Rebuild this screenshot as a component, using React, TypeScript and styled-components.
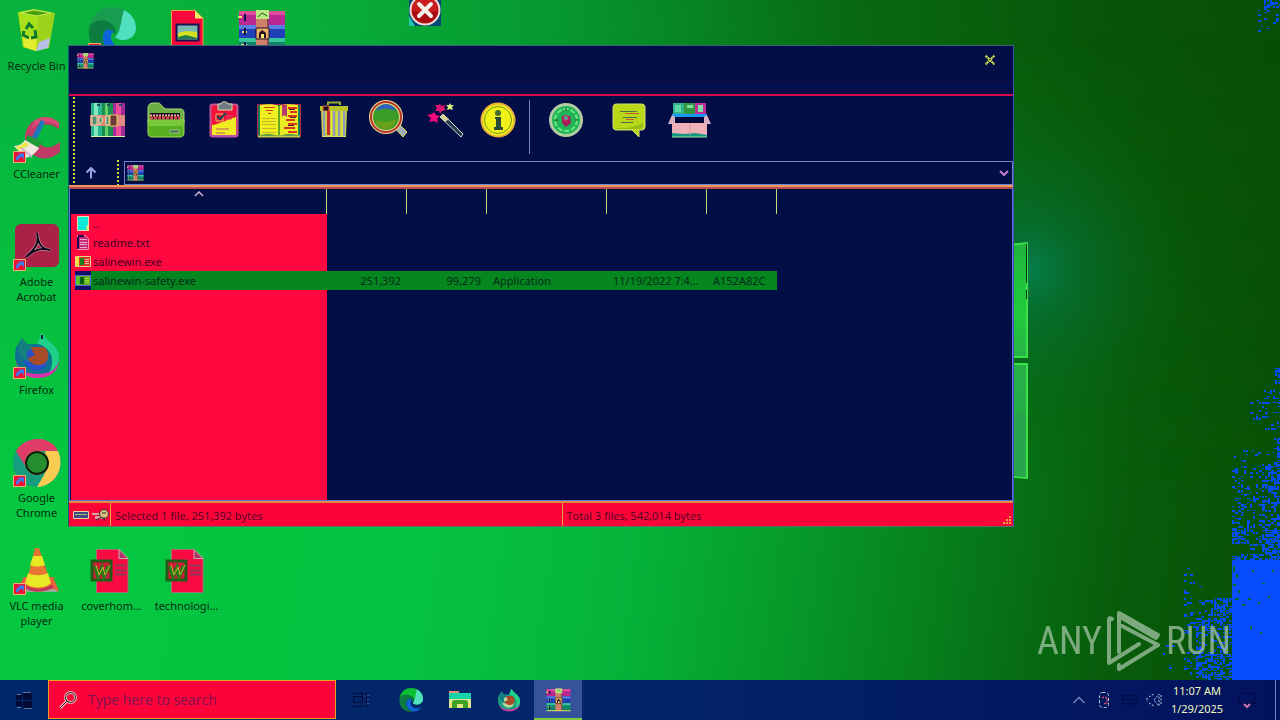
import React from "react";
import styled, { createGlobalStyle, css } from "styled-components";

const navy = "#020e45";
const red = "#ff0840";

const GlobalStyle = createGlobalStyle`
  * { box-sizing: border-box; }
  body { margin: 0; font-family: "Noto Sans", "Open Sans", sans-serif; font-size: 11px; line-height: 15px; color: #06351c; }
  button, input { font: inherit; color: inherit; border: 0; padding: 0; margin: 0; background: none; border-radius: 0; }
  svg { display: block; }
`;

const Screen = styled.main`
  position: relative;
  display: flex;
  flex-direction: column;
  min-height: 100vh;
  overflow: hidden;
`;

const WallpaperSvg = styled.svg`
  position: absolute;
  inset: 0;
  width: 100%;
  height: 100%;
`;

const Desktop = styled.div`
  position: relative;
  flex: 1;
  min-height: 680px;
`;

const IconGrid = styled.div`
  display: grid;
  grid-template-columns: repeat(4, 75px);
  grid-template-rows: repeat(6, 108px);
  padding-top: 7px;
`;

const Shortcut = styled.button<{ $col: number; $row: number }>`
  grid-column: ${(p) => p.$col};
  grid-row: ${(p) => p.$row};
  display: flex;
  flex-direction: column;
  align-items: center;
  gap: 3px;
  width: 73px;
  align-self: start;
  color: #032c14;
  text-align: center;
`;

const Window = styled.section`
  position: absolute;
  top: 45px;
  left: 68px;
  right: 266px;
  display: flex;
  flex-direction: column;
  background: ${navy};
  border: 1px solid #3b4fb4;
  border-top-color: #3a6280;
  border-left-color: #08606a;
  border-bottom-color: #5a6a70;
`;

const TitleBar = styled.header`
  display: flex;
  align-items: center;
  justify-content: space-between;
  height: 30px;
  padding: 0 17px 2px 8px;
`;

const MenuBar = styled.div`
  height: 20px;
  border-bottom: 2px solid #d9084c;
  background: linear-gradient(transparent 6px, #160a52 6px, #160a52 7px, #031052 7px, #031052 12px, transparent 12px);
`;

const Rebar = styled.div`
  display: flex;
  gap: 3px;
  padding: 1px 0 0 4px;
  border-bottom: 2px solid #f0985c;
`;

const Bands = styled.div`
  flex: 1;
  display: flex;
  flex-direction: column;
`;

const Grip = styled.div`
  width: 2px;
  background: repeating-linear-gradient(#d6e23c 0 2px, transparent 2px 4px);
`;

const Toolbar = styled.div`
  display: flex;
  align-items: flex-start;
  height: 63px;
`;

const ToolButton = styled.button<{ $width: number }>`
  display: flex;
  justify-content: center;
  width: ${(p) => p.$width}px;
  padding-top: 3px;
`;

const ToolDivider = styled.div`
  width: 1px;
  height: 54px;
  margin: 3px 9px 0;
  background: #7682c6;
`;

const AddressBand = styled.div`
  display: flex;
  height: 25px;
`;

const UpButton = styled.button`
  display: flex;
  align-items: center;
  justify-content: center;
  width: 26px;
  margin-right: 13px;
`;

const AddressBox = styled.div`
  flex: 1;
  display: flex;
  align-items: center;
  gap: 4px;
  height: 24px;
  margin: 1px 0 0 5px;
  padding: 0 3px 1px 2px;
  border: 1px solid #7480c8;
`;

const AddressInput = styled.input`
  flex: 1;
  min-width: 0;
`;

const ListPane = styled.div`
  height: 314px;
  padding-left: 1px;
  border: 1px solid #6270d8;
  border-top: 2px solid #b84c50;
  background: linear-gradient(${red}, ${red}) 1px 25px / 256px 100% no-repeat ${navy};
`;

const FileTable = styled.table`
  width: 706px;
  table-layout: fixed;
  border-collapse: separate;
  border-spacing: 0;
`;

const HeadCell = styled.th`
  height: 25px;
  padding: 0 0 16px;
  border-right: 1px solid #c8d878;
  & > svg { margin: 0 auto; }
`;

const Cell = styled.td<{ $right?: boolean; $selected?: boolean }>`
  height: 19px;
  padding: 0 6px;
  overflow: hidden;
  white-space: nowrap;
  text-overflow: ellipsis;
  text-align: ${(p) => (p.$right ? "right" : "left")};
  color: ${(p) => (p.$selected ? "#032c1c" : "#480022")};
  background: ${(p) => (p.$selected ? "#05861e" : "none")};
`;

const NameCell = styled(Cell)`
  padding: 0 0 0 4px;
  ${(p) =>
    p.$selected &&
    css`
      background: linear-gradient(90deg, ${red} 4px, #10106a 4px, #10106a 20px, #05861e 20px);
    `}
`;

const FileName = styled.span`
  display: flex;
  align-items: center;
  gap: 2px;
`;

const StatusBar = styled.footer`
  display: flex;
  height: 25px;
  border-top: 2px solid #e08a40;
  background: #fb0438;
  color: #500028;
  font-family: "Open Sans", "Noto Sans", sans-serif;
`;

const StatusIcons = styled.div`
  display: flex;
  align-items: center;
  gap: 3px;
  width: 41px;
  padding-left: 4px;
`;

const StatusText = styled.div`
  flex: 1 1 0;
  display: flex;
  align-items: center;
  justify-content: space-between;
  padding: 1px 0 0 4px;
  border-left: 1px solid #f0a040;
`;

const SizeGrip = styled.svg`
  align-self: flex-end;
`;

const ErrorCursor = styled.svg`
  position: absolute;
  top: 0;
  left: 409px;
`;

const Watermark = styled.div`
  position: absolute;
  right: 49px;
  bottom: 8px;
  display: flex;
  align-items: center;
  gap: 5px;
  color: #b4cfb4;
  opacity: 0.68;
  font-family: "Roboto Condensed", "Roboto", sans-serif;
  font-size: 38px;
  line-height: 62px;
`;

const Taskbar = styled.nav`
  position: relative;
  display: flex;
  height: 40px;
  background: linear-gradient(90deg, #02286c, #032468 50%, #03125e);
`;

const TaskButton = styled.button<{ $active?: boolean }>`
  display: flex;
  align-items: center;
  justify-content: center;
  width: 48px;
  margin-right: 1px;
  ${(p) =>
    p.$active &&
    css`
      background: #36529a;
      border-bottom: 2px solid #80cc40;
    `}
`;

const StartButton = styled(TaskButton)`
  margin: 0;
`;

const TaskViewButton = styled(TaskButton)`
  width: 50px;
`;

const SearchBox = styled.label`
  display: flex;
  align-items: center;
  gap: 11px;
  width: 288px;
  margin-bottom: 1px;
  padding: 0 10px;
  border: 1px solid #e8a818;
  background: #fd0339;
`;

const SearchInput = styled.input`
  flex: 1;
  min-width: 0;
  font-family: "Open Sans", "Noto Sans", sans-serif;
  font-size: 14px;
  line-height: 20px;
  outline: 0;
  &::placeholder { color: #7c1250; opacity: 1; }
`;

const Tray = styled.div`
  display: flex;
  align-items: center;
  gap: 8px;
  margin-left: auto;
`;

const TrayButton = styled.button`
  display: block;
`;

const Clock = styled.time`
  width: 54px;
  text-align: center;
  line-height: 18px;
  color: #eef8c0;
`;

const ShowDesktop = styled.button`
  align-self: stretch;
  width: 5px;
  margin-left: 5px;
  border-left: 1px solid #7080c0;
`;

/* Speckled blue patches of the wallpaper: x, y, width, height, density */
const patches = [
  [1275, 368, 5, 16, 0.9], [1264, 390, 16, 14, 0.5], [1250, 400, 30, 30, 0.2],
  [1274, 438, 6, 28, 0.55], [1234, 450, 40, 14, 0.16], [1232, 466, 48, 62, 0.34],
  [1262, 464, 18, 96, 0.3], [1232, 528, 17, 16, 0.85], [1250, 530, 30, 30, 0.35],
  [1266, 530, 14, 30, 0.6], [1232, 554, 16, 6, 0.7], [1184, 568, 18, 30, 0.12],
  [1184, 598, 48, 36, 0.22], [1211, 598, 21, 18, 0.7], [1196, 618, 36, 62, 0.42],
  [1184, 652, 48, 28, 0.4], [1264, 0, 16, 7, 0.7], [1258, 8, 22, 24, 0.14],
  [1160, 645, 24, 25, 0.05],
];

function speckles() {
  let seed = 7;
  const next = () => {
    seed = (seed * 16807) % 2147483647;
    return seed / 2147483647;
  };
  let d = "";
  for (const [x, y, w, h, density] of patches) {
    for (let j = y; j < y + h; j += 2) {
      for (let i = x; i < x + w; i += 3) {
        if (next() < density) {
          const width = Math.min(next() < 0.5 ? 2 : 3, x + w - i);
          const height = next() < 0.3 ? 1 : 2;
          d += `M${i} ${j}h${width}v${height}h-${width}z`;
        }
      }
    }
  }
  return d;
}
const specklePath = speckles();

const Wallpaper = () => (
  <WallpaperSvg viewBox="0 0 1280 720" preserveAspectRatio="xMaxYMax slice" aria-hidden="true">
    <defs>
      <linearGradient id="base" gradientUnits="userSpaceOnUse" x1="0" y1="60" x2="1280" y2="-40">
        <stop offset="0" stopColor="#08b43e" />
        <stop offset=".24" stopColor="#08ae3a" />
        <stop offset=".42" stopColor="#069a30" />
        <stop offset=".54" stopColor="#078424" />
        <stop offset=".66" stopColor="#086a12" />
        <stop offset=".85" stopColor="#085608" />
        <stop offset="1" stopColor="#084e04" />
      </linearGradient>
      <linearGradient id="low" gradientUnits="userSpaceOnUse" x1="0" y1="520" x2="1240" y2="700">
        <stop offset="0" stopColor="#05c840" />
        <stop offset=".34" stopColor="#05c240" />
        <stop offset=".5" stopColor="#05b43a" />
        <stop offset=".62" stopColor="#069c2a" />
        <stop offset=".75" stopColor="#067e1c" />
        <stop offset=".88" stopColor="#085e0c" />
        <stop offset="1" stopColor="#085004" />
      </linearGradient>
      <linearGradient id="fade" x1="0" y1="0" x2="0" y2="1">
        <stop offset=".05" stopColor="#000" />
        <stop offset=".7" stopColor="#fff" />
      </linearGradient>
      <mask id="lower"><rect width="1280" height="720" fill="url(#fade)" /></mask>
      <radialGradient id="glow" gradientUnits="userSpaceOnUse" cx="1030" cy="270" r="170">
        <stop offset="0" stopColor="#058050" stopOpacity=".9" />
        <stop offset=".3" stopColor="#067040" stopOpacity=".5" />
        <stop offset="1" stopColor="#086018" stopOpacity="0" />
      </radialGradient>
      <linearGradient id="pane" x1="0" y1="0" x2="0" y2="1">
        <stop offset="0" stopColor="#20b43c" />
        <stop offset=".3" stopColor="#20cc3c" />
        <stop offset=".5" stopColor="#28b048" />
        <stop offset="1" stopColor="#22a848" />
      </linearGradient>
    </defs>
    <rect width="1280" height="720" fill="url(#base)" />
    <rect width="1280" height="720" fill="url(#low)" mask="url(#lower)" />
    <rect x="840" y="90" width="380" height="400" fill="url(#glow)" />
    <path d="M960 250L1027 243V357H960zM960 364H1027V478L960 472z" fill="url(#pane)" stroke="#3ce048" strokeWidth="2" />
    <path d="M1026.500 244v39M1026.500 290v9" stroke="#043010" />
    <path d="M1012 415L1026 413V477L1012 476z" fill="#28a44c" />
    <path d="M1232 560H1280V680H1232z" fill="#084cff" />
    <path d={specklePath} fill="#084cf4" />
    <path d="M1252 570h2v2h-2zM1262 583h3v1h-3zM1258 602h2v2h-2zM1268 596h2v2h-2zM1250 626h2v3h-2zM1260 632h2v2h-2zM1272 570h2v2h-2zM1248 598h3v2h-3zM1236 574h2v4h-2zM1238 590h2v3h-2zM1233 566h2v6h-2zM1233 584h3v2h-3zM1235 598h4v2h-4zM1242 604h3v2h-3z" fill="#08682a" />
  </WallpaperSvg>
);

const ArrowBadge = () => (
  <g>
    <path d="M.5 36.500h12v11H.5z" fill="#e8143c" stroke="#f0b070" />
    <path d="M3 45c0-4 2-5 4-5l-1.500-1.500H11V44L9 42c-3 0-3 1-4 3.500z" fill="#3a7cf0" />
  </g>
);

const RecycleBin = () => (
  <svg width="48" height="48" viewBox="0 0 48 48">
    <path d="M5 5L21 2l21 4-6 35-13 3-13-4z" fill="#9cd41c" />
    <path d="M5 5l20 4-2 35-13-4z" fill="#a8e01c" />
    <path d="M10 28l14 2-1 14-12-4z" fill="#e4ec30" />
    <path d="M26 35l11-4-2 10-12 3z" fill="#b8c0ea" />
    <path d="M8 6l13-3 17 3-14 3z" fill="#4aa010" stroke="#c8f050" strokeWidth="1" />
    <g fill="none" stroke="#0c7a28" strokeWidth="3"><path d="M13 22l3-5 4 4M22 23l1 7-5 1M16 31l-6-3 1-4" /></g>
  </svg>
);

const EdgeIcon = ({ size, badge }: { size: number; badge?: boolean }) => (
  <svg width={size} height={size} viewBox="0 0 48 48">
    <path d="M1 22C2 9 12 0 24 0c14 0 24 10 24 21 0 8-6 12-13 12-5 0-8-2-7-4 3-3 2-10-5-13C13 12 3 15 1 22z" fill={badge ? "#189c50" : "#10c034"} />
    <path d="M36 3c8 4 12 11 12 18 0 8-6 12-13 12-5 0-8-2-7-4 5-5 5-18 8-26z" fill="#50e0c0" />
    <path d="M1 22c2-8 12-11 20-7 7 4 8 9 6 13-2-5-7-7-10-4-6 6-1 20 12 23C12 51-1 38 1 22z" fill="#0c7c40" />
    <path d="M17 24c-5 7-1 20 12 23 8 0 13-4 16-9-8 5-18 3-21-4-2-4-1-8 2-9-4-3-7-3-9-1z" fill="#0c64d8" />
    {badge && <ArrowBadge />}
  </svg>
);

const ImageFile = () => (
  <svg width="48" height="48" viewBox="0 0 48 48">
    <path d="M8.500 3.500H32l8 8V46H8.500z" fill="#f8083c" stroke="#e8a040" />
    <path d="M32 3.500l8 8h-8z" fill="#f0f060" />
    <path d="M13.500 17.500h22v16h-22z" fill="#78b8b0" stroke="#181050" strokeWidth="2" />
    <path d="M15 26l8-2 11 1v7H15z" fill="#d8e020" />
    <path d="M15 30l8-2 11 3v1H15z" fill="#20804c" />
  </svg>
);

const Books = ({ size }: { size: number }) => (
  <svg width={size} height={size} viewBox="0 0 48 48">
    <path d="M1 4h46v14H1z" fill="#b82890" />
    <path d="M1 4h46v4H1z" fill="#e04c9c" />
    <path d="M1 18h46v13H1z" fill="#2040b8" />
    <path d="M1 18h46v4H1z" fill="#5880e0" />
    <path d="M1 31h46v14H1z" fill="#108468" />
    <path d="M1 31h46v4H1z" fill="#38c49c" />
    <path d="M0 10h4M4 25h5M3 38h6" stroke="#eee860" strokeWidth="2" />
    <path d="M7 7v7M7 21v7M7 35v7" stroke="#101050" strokeWidth="2" />
    <path d="M18 3h13v43H18z" fill="#d08068" />
    <path d="M29 3h2v43h-2z" fill="#884858" />
    <path d="M18 3h13v9H18z" fill="#b8e880" />
    <path d="M20 10l4-4 5 3" stroke="#205828" strokeWidth="1" fill="none" />
    <path d="M18 21h13v11H18z" fill="#e8b060" stroke="#201030" strokeWidth="1" />
    <path d="M21 31v-5l3-3 4 3v5z" fill="#281020" />
    <path d="M23 27h3v4h-3z" fill="#f4ec70" />
    <path d="M1 45.500h46" stroke="#dce060" strokeWidth="2" />
  </svg>
);

const CCleaner = () => (
  <svg width="48" height="48" viewBox="0 0 48 48">
    <path d="M46 8C41 2 31 0 22 5 10 12 9 29 18 38c9 8 21 7 29-1V27c-6 5-14 8-20 2-6-5-5-14 1-18 6-3 12-1 18 3z" fill="#c23a68" />
    <path d="M22 5c8-5 18-4 24 3v4C38 5 27 5 18 14z" fill="#d84c78" />
    <path d="M28 5l4 2-8 17-5-2z" fill="#1c78b8" />
    <path d="M15 20l14 7-4 6-13-7z" fill="#1c9c38" />
    <path d="M12 25l14 8c-3 5-8 9-14 10L1 31c5 0 9-3 11-6z" fill="#f0e8dc" />
    <path d="M3 31c5 0 7-2 9-4l4 2c-3 4-7 6-11 6z" fill="#eee84c" />
    <path d="M8 33l11 9" stroke="#c8b4dc" strokeWidth="2" />
    <ArrowBadge />
  </svg>
);

const Acrobat = () => (
  <svg width="48" height="48" viewBox="0 0 48 48">
    <rect x="2" y="1" width="44" height="43" rx="6" fill="#ac2148" />
    <path d="M24 10c2 9 0 14-11 24 10-9 17-9 24-7-8 0-12-7-13-17z" fill="none" stroke="#d0b0b0" strokeWidth="3" />
    <path d="M24 10c2 9 0 14-11 24 10-9 17-9 24-7-8 0-12-7-13-17z" fill="none" stroke="#10041c" strokeWidth="2" />
    <ArrowBadge />
  </svg>
);

const Firefox = ({ size, badge }: { size: number; badge?: boolean }) => (
  <svg width={size} height={size} viewBox="0 0 48 48">
    <path d="M6 12l3-5 5 6 11 0 4-11c3 8 15 11 17 22C48 36 39 46 25 46 11 46 2 36 2 24c0-5 1-9 4-12z" fill={badge ? "#0c7090" : "#18a080"} />
    <path d="M24 13l5-12c3 9 15 11 17 23 1 9-4 15-10 18 4-7 5-18-2-24-3-3-7-5-10-5z" fill="#20d088" />
    <path d="M3 29c2 11 11 14 22 14 11 0 20-5 21-14 0 11-9 18-21 18C12 47 4 40 3 29z" fill="#d830a8" />
    <path d="M8 19c8-4 14 0 21 1 8 5 6 18-3 19-10 2-18-8-14-15z" fill={badge ? "#2850c8" : "#b8d8a0"} />
    <path d="M17 16h14c5 3 6 12 1 16-6 4-15 2-17-5l7-3z" fill="#a84c28" />
    <path d="M6 12l3-5 5 6 6 1c-2 3-2 5-6 6-1 5 1 8 3 11C5 28 4 18 6 12z" fill="#148080" />
    {badge && <path d="M29 4v4" stroke="#102030" strokeWidth="2" />}
    {badge && <ArrowBadge />}
  </svg>
);

const Chrome = () => (
  <svg width="48" height="48" viewBox="0 0 48 48">
    <circle cx="24" cy="24" r="24" fill="#189c80" />
    <path d="M3 12C11-2 36-6 45 12H24L13 28z" fill="#e03c68" />
    <path d="M45 12c7 15-1 35-21 36l11-19-3-17z" fill="#f8cc50" />
    <circle cx="24" cy="24" r="12" fill="#f4f080" />
    <circle cx="24" cy="24" r="11" fill="#258c30" stroke="#081c08" strokeWidth="2" />
    <ArrowBadge />
  </svg>
);

const Vlc = () => (
  <svg width="48" height="48" viewBox="0 0 48 48">
    <path d="M11 30h29l6 14H3z" fill="#e8603c" />
    <path d="M3 42h39l3 3H3z" fill="#98a898" />
    <path d="M22 1h4l12 36c-5 5-20 5-25 0z" fill="#e87434" />
    <path d="M20 9h9l3 9c-4 2-11 2-15 0zM15 26c6 3 13 3 20 0l3 10c-6 6-20 6-26 0z" fill="#e8e824" />
    <path d="M13 38c7 5 17 5 25 0l3 2c-8 6-22 6-30 1z" fill="#c03858" />
    <ArrowBadge />
  </svg>
);

const WordFile = () => (
  <svg width="48" height="48" viewBox="0 0 48 48">
    <path d="M8.500 2.500H31l9 9v34H8.500z" fill="#f90a40" stroke="#a87078" />
    <path d="M31 2.500l9 9h-9z" fill="#b03068" stroke="#ccb0b0" />
    <path d="M27 18.500h11M27 23.500h11M27 27.500h11" stroke="#8c3858" strokeWidth="2" />
    <path d="M4 14h19v19H4z" fill="#d41838" stroke="#205c18" strokeWidth="3" />
    <path d="M7 19l3 10 4-8 2 8 5-10" fill="none" stroke="#287818" strokeWidth="4" />
    <path d="M8 18l3 10 4-8 2 8 5-10" fill="none" stroke="#d0b030" strokeWidth="1" />
  </svg>
);

const tool = { width: 40, height: 40, viewBox: "0 0 40 40" };

const AddIcon = () => (
  <svg {...tool}>
    <path d="M4 3h11v34H4z" fill="#28b48c" /><path d="M7 3h4v34H7z" fill="#80e8c0" />
    <path d="M15 3h11v34H15z" fill="#18904c" /><path d="M18 3h3v34h-3z" fill="#60cc68" />
    <path d="M26 3h12v34H26z" fill="#a02c98" /><path d="M29 3h5v34h-5z" fill="#f04c9c" />
    <path d="M10 5h3M20 5h3M32 5h3" stroke="#205060" strokeWidth="2" />
    <path d="M3 15h35v11H3z" fill="#d88c78" />
    <path d="M5 16h5v9H5zM12 16l4 4-4 5zM19 16h3v9h-3z" fill="#508c70" stroke="#e8dcb0" />
    <path d="M23 15h7v11h-7z" fill="#6c3838" stroke="#f0d060" strokeWidth="1" />
    <path d="M32 17h5v7h-5z" fill="#e88888" />
    <path d="M4 36.500h34" stroke="#d8f0a0" />
  </svg>
);

const ExtractIcon = () => (
  <svg {...tool}>
    <path d="M2 8c0-3 2-5 5-5h5c4 0 4 6 9 6h14c2 0 3 2 3 4v10H2z" fill="#6cb044" stroke="#a8d870" />
    <path d="M4 13h30v9H4z" fill="#181028" />
    <path d="M4 15.500h30" stroke="#f4b0a0" strokeWidth="2" strokeDasharray="2 1" />
    <path d="M4 18h30" stroke="#e04040" strokeWidth="3" strokeDasharray="3 1" />
    <path d="M2 20h36v13c0 3-2 4-4 4H6c-2 0-4-1-4-4z" fill="#58b020" stroke="#a0dc60" />
    <path d="M3 21h34v5H3z" fill="#78c838" />
    <path d="M24 30h9v3h-9z" fill="#3c6c48" stroke="#98c088" />
  </svg>
);

const TestIcon = () => (
  <svg {...tool}>
    <rect x="6.500" y="4.500" width="27" height="32" rx="2" fill="#f4103c" stroke="#c05898" strokeWidth="2" />
    <path d="M8 25c9-1 15-6 24-8v18H8z" fill="#f0ec24" />
    <path d="M14 4h3c0-3 7-3 7 0h4v6H14z" fill="#707c84" stroke="#dce0a0" />
    <path d="M12 14h7v7h-7z" fill="none" stroke="#e8c050" /><path d="M13 16l3 3 6-6" fill="none" stroke="#184858" strokeWidth="2" />
    <path d="M22 16h7M22 19h6M12 29h13M12 33h9" stroke="#c05868" strokeWidth="1" />
    <path d="M7 36h26" stroke="#b850b0" strokeWidth="2" />
  </svg>
);

const ViewIcon = () => (
  <svg width="46" height="40" viewBox="0 0 46 40">
    <path d="M1.500 4.500h43v32h-43z" fill="#187850" stroke="#b02850" />
    <path d="M4 5c7-1 14-1 19 1v30c-6-2-13-2-19-1z" fill="#eef020" />
    <path d="M23 6c5-2 12-2 19-1v30c-6-1-13-1-19 1z" fill="#ecec24" />
    <path d="M8 7.500h11M10 10.500h7M12 13.500h3" stroke="#d83c20" />
    <path d="M6 18.500h14M6 21.500h14M6 24.500h14M6 28.500h14M6 32.500h14" stroke="#c8b428" />
    <path d="M23 6v30" stroke="#68a820" strokeWidth="2" />
    <path d="M26 5h5v12l-3-2-2 2z" fill="#b83870" />
    <path d="M32 8h9M34 12h7M32 16h9M30 20h9M32 24h9M28 28h11M32 32h9" stroke="#dc3420" strokeWidth="2" />
    <path d="M33 9.500h6M34 17.500h6M32 25.500h6" stroke="#402830" strokeWidth="1" />
    <path d="M2 36.500h42" stroke="#c8c848" strokeWidth="2" />
  </svg>
);

const DeleteIcon = () => (
  <svg {...tool}>
    <path d="M14 5V2.500h12V5" fill="none" stroke="#98a830" strokeWidth="2" />
    <path d="M6 6h28v5H6z" fill="#b8c428" /><path d="M9 6h6v5H9z" fill="#201020" stroke="#e87040" />
    <path d="M7 11h26l-1 26H8z" fill="#c4cc48" />
    <path d="M10 11v25M20 11v25M25 11v25M30 11v25" stroke="#9098c0" strokeWidth="2" />
    <path d="M14.500 11v24" stroke="#c82830" strokeWidth="3" /><path d="M17.500 11v25M23 11v25M28 11v25" stroke="#e4ec3c" />
    <path d="M8 36.500h24" stroke="#e0e068" />
  </svg>
);

const FindIcon = () => (
  <svg {...tool}>
    <path d="M26 27l4-4 9 9-4 5z" fill="#9cb0b8" stroke="#e4d850" />
    <circle cx="18" cy="17" r="15" fill="#3c9c28" stroke="#e8d890" strokeWidth="4" />
    <circle cx="18" cy="17" r="15" fill="none" stroke="#b8342c" strokeWidth="2" />
    <path d="M8 11C11 2 25 2 28 11c-6-3-14-3-20 0z" fill="#3060c0" />
    <path d="M7 20c7 3 16 2 22-1-4 13-19 13-22 1z" fill="#68a018" />
  </svg>
);

const WizardIcon = () => (
  <svg {...tool}>
    <path d="M15 17l3-3 20 20-2 3z" fill="#283c50" stroke="#d0d8c8" />
    <path d="M15 17l3-3 6 5-4 3z" fill="#d8d098" />
    <path d="M9 12l2 3 4 1-3 3 1 4-4-2-5 1 2-4-4-3 5-1z" fill="#f80878" />
    <path d="M15 3l1 3 4-1-1 3 2 2-4 1-2 3-1-3-4 0 2-3-2-3h4z" fill="#d81870" />
    <path d="M25 3l1 2 3 0-2 2 1 3-3-1-3 1 1-3-2-2h3z" fill="#d8f080" />
  </svg>
);

const InfoIcon = () => (
  <svg {...tool}>
    <circle cx="20" cy="20" r="16.500" fill="#f0ee18" stroke="#e8b03c" strokeWidth="2" />
    <circle cx="20" cy="20" r="13.500" fill="#eef218" stroke="#7c9820" strokeWidth="1" />
    <circle cx="20" cy="13" r="3" fill="#486c30" />
    <path d="M17 17h6v10h2v3h-9v-3h2v-8h-1z" fill="#284c34" />
  </svg>
);

const ScanIcon = () => (
  <svg {...tool}>
    <circle cx="20" cy="20" r="15.500" fill="#20b458" stroke="#b0cca0" strokeWidth="3" />
    <circle cx="20" cy="20" r="11" fill="none" stroke="#70e880" strokeWidth="2" strokeDasharray="5 2" />
    <path d="M16 16h8l1 7-5 4-4-4z" fill="#a81c58" />
    <circle cx="20" cy="18" r="2.500" fill="#58a898" stroke="#d81c58" strokeWidth="1" />
    <path d="M20 8v3M9 20h3M29 20h3" stroke="#084820" strokeWidth="1" />
  </svg>
);

const CommentIcon = () => (
  <svg {...tool}>
    <path d="M8 4h24c3 0 4 1 4 4v18c0 3-1 4-4 4h-2v7l-7-7H8c-3 0-4-1-4-4V8c0-3 1-4 4-4z" fill="#b8d818" stroke="#d0e070" />
    <path d="M7 28c10 1 20-1 27-5v3c0 2-1 3-3 3H8z" fill="#98bc18" />
    <path d="M11 11.500h17M14 17.500h14M12 22.500h12" stroke="#50704c" strokeWidth="1" /><path d="M16 13.500h14M17 19.500h8" stroke="#d05830" strokeWidth="1" />
  </svg>
);

const SfxIcon = () => (
  <svg width="46" height="40" viewBox="0 0 46 40">
    <path d="M7 3h11v12H7z" fill="#30b490" /><path d="M18 3h11v12H18z" fill="#309840" /><path d="M29 3h11v12H29z" fill="#c03098" />
    <path d="M9 5h6v7H9z" fill="#60d8a8" /><path d="M21 5h6v3h-6zM32 5h5v7h-5z" fill="#80e0a0" />
    <path d="M6 14h35v3H6z" fill="#1898f0" />
    <path d="M7 17h33v7H7z" fill="#03083c" />
    <path d="M6 15l3 2v7H2zM41 15l-3 2v7h7z" fill="#d8b0c0" />
    <path d="M6 23h35v14H6z" fill="#f0b0b8" /><path d="M6 33l12 1 11-1 12 2v2H6z" fill="#109880" />
    <path d="M24 23v12" stroke="#d898a0" />
    <path d="M6 37h35" stroke="#a8e0a8" />
  </svg>
);

const tools: { name: string; width: number; Icon: () => React.JSX.Element }[] = [
  { name: "Add", width: 58, Icon: AddIcon },
  { name: "Extract To", width: 60, Icon: ExtractIcon },
  { name: "Test", width: 56, Icon: TestIcon },
  { name: "View", width: 54, Icon: ViewIcon },
  { name: "Delete", width: 56, Icon: DeleteIcon },
  { name: "Find", width: 52, Icon: FindIcon },
  { name: "Wizard", width: 62, Icon: WizardIcon },
  { name: "Info", width: 44, Icon: InfoIcon },
];
const archiveTools = [
  { name: "VirusScan", width: 54, Icon: ScanIcon },
  { name: "Comment", width: 72, Icon: CommentIcon },
  { name: "SFX", width: 48, Icon: SfxIcon },
];

const FolderUp = () => (
  <svg width="16" height="17" viewBox="0 0 16 17">
    <path d="M2.500 1.500h11v14h-11z" fill="#10e8d8" stroke="#f0d8b0" /><path d="M12 10h2v6h-3" fill="#d8f080" />
  </svg>
);
const TextFile = () => (
  <svg width="16" height="17" viewBox="0 0 16 17">
    <path d="M2.500 1.500h8l3 3v11h-11z" fill="#c82c78" stroke="#f090b0" />
    <path d="M3 2h6M3 3v12" stroke="#201050" strokeWidth="2" /><path d="M5 5.500h7M5 8.500h7M5 10.500h7M5 13.500h7" stroke="#e8a8d0" />
  </svg>
);
const ExeFile = ({ selected }: { selected?: boolean }) => (
  <svg width="16" height="17" viewBox="0 0 16 17">
    <path d="M.5 3.500h15v10H.5z" fill={selected ? "#60b020" : "#d83830"} stroke={selected ? "#5868d0" : "#e8d080"} />
    <path d="M1 4h3v9H1z" fill={selected ? "#50c838" : "#f0e040"} />
    <path d="M5 5h4v7H5z" fill={selected ? "#086018" : "#208020"} />
    <path d="M10 6.500h4M10 8.500h4M10 10.500h4" stroke={selected ? "#98e040" : "#f0b8a0"} />
  </svg>
);

const shortcuts = [
  { col: 1, row: 1, label: "Recycle Bin", icon: <RecycleBin /> },
  { col: 1, row: 2, label: "CCleaner", icon: <CCleaner /> },
  { col: 1, row: 3, label: "Adobe Acrobat", icon: <Acrobat /> },
  { col: 1, row: 4, label: "Firefox", icon: <Firefox size={48} badge /> },
  { col: 1, row: 5, label: "Google Chrome", icon: <Chrome /> },
  { col: 1, row: 6, label: "VLC media player", icon: <Vlc /> },
  { col: 2, row: 1, label: "", icon: <EdgeIcon size={48} badge /> },
  { col: 3, row: 1, label: "", icon: <ImageFile /> },
  { col: 4, row: 1, label: "", icon: <Books size={48} /> },
  { col: 2, row: 6, label: "coverhom...", icon: <WordFile /> },
  { col: 3, row: 6, label: "technologi...", icon: <WordFile /> },
];

const files = [
  { name: "..", icon: <FolderUp /> },
  { name: "readme.txt", icon: <TextFile /> },
  { name: "salinewin.exe", icon: <ExeFile /> },
];

export default function App() {
  return (
    <>
      <GlobalStyle />
      <Screen>
        <Wallpaper />
        <Desktop>
          <IconGrid>
            {shortcuts.map((s) => (
              <Shortcut key={`${s.col}-${s.row}`} $col={s.col} $row={s.row}>
                {s.icon}
                {s.label && <span>{s.label}</span>}
              </Shortcut>
            ))}
          </IconGrid>

          <Window>
            <TitleBar>
              <Books size={17} />
              <button aria-label="Close">
                <svg width="12" height="12" viewBox="0 0 12 12"><path d="M1.500 1.500l9 9M10.500 1.500l-9 9" stroke="#ccd848" strokeWidth="2" /><path d="M1 1l10 10M11 1L1 11" stroke="#18305c" strokeWidth="1" strokeDasharray="1 2" /></svg>
              </button>
            </TitleBar>
            <MenuBar />
            <Rebar>
              <Grip />
              <Bands>
                <Toolbar>
                  {tools.map(({ name, width, Icon }) => (
                    <ToolButton key={name} $width={width} aria-label={name}><Icon /></ToolButton>
                  ))}
                  <ToolDivider />
                  {archiveTools.map(({ name, width, Icon }) => (
                    <ToolButton key={name} $width={width} aria-label={name}><Icon /></ToolButton>
                  ))}
                </Toolbar>
                <AddressBand>
                  <UpButton aria-label="Up one level">
                    <svg width="12" height="12" viewBox="0 0 12 12"><path d="M6 11.500V1M1.500 5.500L6 1l4.500 4.500" fill="none" stroke="#98a4e4" strokeWidth="2" /></svg>
                  </UpButton>
                  <Grip />
                  <AddressBox>
                    <Books size={17} />
                    <AddressInput aria-label="Path" />
                    <button aria-label="Show folders">
                      <svg width="10" height="8" viewBox="0 0 10 8"><path d="M1 2l4 4 4-4" fill="none" stroke="#c080cc" strokeWidth="2" /></svg>
                    </button>
                  </AddressBox>
                </AddressBand>
              </Bands>
            </Rebar>
            <ListPane>
              <FileTable>
                <colgroup>
                  <col width="256" /><col width="80" /><col width="80" /><col width="120" /><col width="100" /><col width="70" />
                </colgroup>
                <thead>
                  <tr>
                    <HeadCell><svg width="10" height="6" viewBox="0 0 10 6"><path d="M1 5l4-4 4 4" fill="none" stroke="#d0b4d8" strokeWidth="1.500" /></svg></HeadCell>
                    <HeadCell /><HeadCell /><HeadCell /><HeadCell /><HeadCell />
                  </tr>
                </thead>
                <tbody>
                  {files.map((f) => (
                    <tr key={f.name}>
                      <NameCell><FileName>{f.icon}{f.name}</FileName></NameCell>
                    </tr>
                  ))}
                  <tr>
                    <NameCell $selected><FileName><ExeFile selected />salinewin-safety.exe</FileName></NameCell>
                    <Cell $selected $right>251,392</Cell>
                    <Cell $selected $right>99,279</Cell>
                    <Cell $selected>Application</Cell>
                    <Cell $selected>11/19/2022 7:4...</Cell>
                    <Cell $selected>A152A82C</Cell>
                  </tr>
                </tbody>
              </FileTable>
            </ListPane>
            <StatusBar>
              <StatusIcons>
                <svg width="16" height="12" viewBox="0 0 16 12"><path d="M.5 2.500h15v7H.5z" fill="#404888" stroke="#e8d0a0" /><path d="M2 5.500h12" stroke="#a8c060" /></svg>
                <svg width="17" height="14" viewBox="0 0 17 14"><path d="M0 5h9v2H0zM3 8h7v3H3z" fill="#d8a0a0" /><circle cx="12" cy="6" r="4.500" fill="#d8c078" stroke="#483040" /><path d="M10 5h4M12 9v4M4 12l6-3" stroke="#382840" /></svg>
              </StatusIcons>
              <StatusText>Selected 1 file, 251,392 bytes</StatusText>
              <StatusText>
                Total 3 files, 542,014 bytes
                <SizeGrip width="12" height="12" viewBox="0 0 12 12"><path d="M8 2h2v2H8zM8 5h2v2H8zM8 8h2v2H8zM5 5h2v2H5zM5 8h2v2H5zM2 8h2v2H2z" fill="#f0a040" /></SizeGrip>
              </StatusText>
            </StatusBar>
          </Window>

          <ErrorCursor width="32" height="26" viewBox="0 0 32 26" aria-hidden="true">
            <path d="M0 0h32v26H0z" fill="#044878" />
            <path d="M0 16l6 10H0z" fill="#20c8b0" />
            <circle cx="16" cy="10" r="14.500" fill="#c81c1c" stroke="#ecd8d4" strokeWidth="2" />
            <path d="M3 10a13 13 0 0026 0c-8 4-18 4-26 0z" fill="#a80c10" />
            <path d="M10 4l12 12M22 4L10 16" stroke="#f4f0ec" strokeWidth="4" strokeLinecap="round" />
          </ErrorCursor>

          <Watermark>
            <span>ANY</span>
            <svg width="54" height="62" viewBox="0 0 54 62" fill="none" stroke="currentColor" strokeWidth="4" strokeLinejoin="round" strokeLinecap="round">
              <path d="M12 42V3l39 22-2 3-34-20M5 9c-3-2-3 0-3 2v42l30-19M15 16l36 19-39 24v-4" />
            </svg>
            <span>RUN</span>
          </Watermark>
        </Desktop>

        <Taskbar>
          <StartButton aria-label="Start">
            <svg width="16" height="17" viewBox="0 0 16 17"><path d="M0 3l6-1v6H0zM7 1l9-1v8H7zM0 9h6v6l-6-1zM7 9h9v8l-9-1z" fill="#020a38" /><path d="M1 2.500h4M7 .5h8M1 15.500h4M8 16.500h8" stroke="#8098b8" strokeWidth=".7" /></svg>
          </StartButton>
          <SearchBox>
            <svg width="18" height="18" viewBox="0 0 18 18" fill="none"><circle cx="11.500" cy="6.500" r="5" stroke="#f0b8a8" strokeWidth="3" /><path d="M8 10l-7 7" stroke="#f0b8a8" strokeWidth="3" /><circle cx="11.500" cy="6.500" r="5" stroke="#281040" /><path d="M8 10l-7 7" stroke="#281040" /></svg>
            <SearchInput aria-label="Search" placeholder="Type here to search" />
          </SearchBox>
          <TaskViewButton aria-label="Task view">
            <svg width="16" height="16" viewBox="0 0 16 16" fill="none" stroke="#020a3c"><path d="M0 1.500h11M.5 4.500h9v6h-9zM0 14.500h11" strokeWidth="1" /><path d="M13.500 0v16" /><path d="M15 3v12" stroke="#9088b0" strokeDasharray="1 3" /></svg>
          </TaskViewButton>
          <TaskButton aria-label="Edge"><EdgeIcon size={24} /></TaskButton>
          <TaskButton aria-label="File Explorer">
            <svg width="24" height="24" viewBox="0 0 24 24"><path d="M1 3h9l2 2h11v5H1z" fill="#e89478" /><path d="M1 5h22v15H1z" fill="#18d4a8" /><path d="M1 11h22v9H1z" fill="#e0e488" /><path d="M4 20v-5c0-2 1-3 3-3h10c2 0 3 1 3 3v5h-5v-4H9v4z" fill="#40a028" /></svg>
          </TaskButton>
          <TaskButton aria-label="Firefox"><Firefox size={24} /></TaskButton>
          <TaskButton aria-label="WinRAR" $active><Books size={25} /></TaskButton>
          <Tray>
            <TrayButton aria-label="Show hidden icons">
              <svg width="14" height="10" viewBox="0 0 14 10"><path d="M1.500 8L7 2.500 12.500 8" fill="none" stroke="#7480b8" strokeWidth="1.500" /></svg>
            </TrayButton>
            <TrayButton aria-label="Device">
              <svg width="20" height="18" viewBox="0 0 20 18" fill="none"><rect x="5.500" y="1.500" width="9" height="15" rx="3" stroke="#c8ccd8" strokeDasharray="3 2" /><path d="M8 6.500h5v6H9" stroke="#c84878" strokeWidth="1.500" strokeDasharray="2 1" /></svg>
            </TrayButton>
            <TrayButton aria-label="Network">
              <svg width="16" height="14" viewBox="0 0 16 14" fill="none" stroke="#020a48"><path d="M.5 2.500h15v8H.5zM3 13h10M0 6.500h16" /></svg>
            </TrayButton>
            <TrayButton aria-label="Volume">
              <svg width="16" height="16" viewBox="0 0 16 16" fill="none" stroke="#c4c8dc" strokeDasharray="2 1.500"><path d="M1 6v4M3 5l5-3M3 11l5 3M8 8l5-6v12zM15 3v10" /></svg>
            </TrayButton>
            <Clock>11:07 AM<br />1/29/2025</Clock>
            <TrayButton aria-label="Notifications">
              <svg width="30" height="20" viewBox="0 0 30 20" fill="none"><path d="M7.500 3.500h16v10h-16z" stroke="#020a48" /><path d="M12 14l3 3 3-3" stroke="#d070b0" strokeWidth="2" /></svg>
            </TrayButton>
            <ShowDesktop aria-label="Show desktop" />
          </Tray>
        </Taskbar>
      </Screen>
    </>
  );
}
